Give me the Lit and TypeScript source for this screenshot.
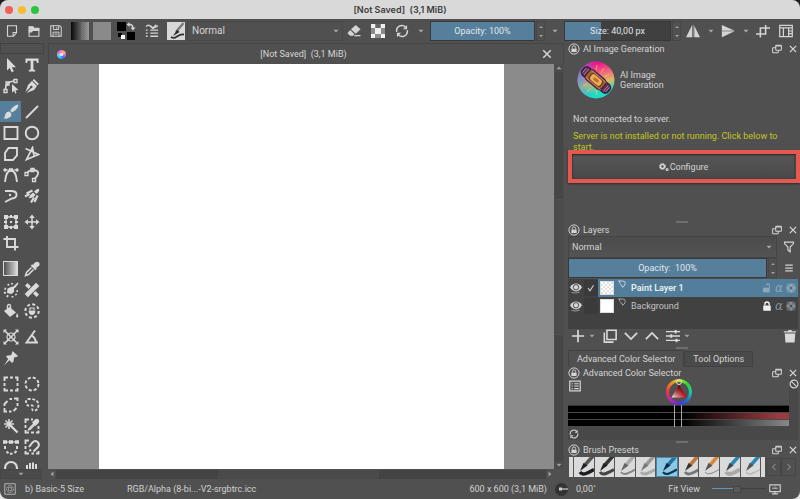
import { LitElement, html, css, svg, nothing, type TemplateResult, type SVGTemplateResult } from "lit";
import { customElement, property } from "lit/decorators.js";
import { classMap } from "lit/directives/class-map.js";
import { styleMap } from "lit/directives/style-map.js";

/* Icons are drawn on a 16 by 16 grid; "f" marks filled parts. */
const icons: Record<string, SVGTemplateResult> = {
  // menus and window parts
  down: svg`<path class="f" d="M3 5.500h10l-5 5.500z"/>`,
  up: svg`<path class="f" d="M3 10.500h10L8 5z"/>`,
  left: svg`<path class="f" d="M11 3v10L5 8z"/>`,
  right: svg`<path class="f" d="M5 3v10l6-5z"/>`,
  close: svg`<path d="M3 3l10 10M13 3L3 13" stroke-width="2"/>`,
  float: svg`<path d="M6 2h9v8H6zM6 6H1v8h9v-4" stroke-width="1.600"/><path d="M6 3h9" stroke-width="2"/>`,
  lockring: svg`<circle cx="8" cy="8" r="6.800" stroke-width="1.300"/><path class="f" d="M4.500 7.500h7V12h-7z"/><path d="M5.800 7.500V6a2.200 2.200 0 014.400 0v1.500"/>`,
  // top bar
  newdoc: svg`<path d="M2 1h12v9.500l-4 4.500H2zM14 10h-4.500v5" stroke-width="1.500"/>`,
  open: svg`<path d="M1.500 15V2.500h5l1 2h7V15z" stroke-width="1.500"/><path class="f" d="M1 2h6l1.500 2.500H15V8H6.500L5 10H1z"/>`,
  save: svg`<path d="M1 1h12l2 2v12H1z" stroke-width="1.400"/><path d="M4.500 1v5h7V1M9 3v2M4 15V9.500h8V15M6 12h4" stroke-width="1.300"/>`,
  brushset: svg`<path d="M1 3q3-3 6 0t8-1M1 7h2M6 7h9M1 10.500h2M6 10.500h9M1 14h2M6 14h9" stroke-width="1.500"/><path d="M6 2l3 3 4-4" stroke-width="2"/>`,
  eraser: svg`<path class="f" d="M10 1l5.500 5L10 11 4.500 6z"/><path class="f" d="M3.600 6.800l5 5L7 13.500H3.500L.5 10.500z"/><path class="f" d="M9 12.500h6.500V14H8z"/>`,
  reload: svg`<path d="M2 9A6 6 0 0112 3.400M14 7A6 6 0 014 12.600" stroke-width="1.700"/><path class="f" d="M13.800 1v5H9zM2.200 15v-5H7z"/>`,
  mirrorh: svg`<path class="f" d="M7 1v14H0zM9.500 2v13H16z"/><path d="M8.200 1v14" stroke-width=".6"/>`,
  mirrorv: svg`<path class="f" d="M1 1v6.300h14zM1 15V8.700h14z"/><path d="M1 8h14" stroke-width="1"/>`,
  croptop: svg`<path d="M0 11.500h11V1M5 15.500V4.500h11" stroke-width="1.800"/>`,
  workspace: svg`<path d="M.8 1.500h14.400v13H.8zM1 4.500h14M5 4.500v10M11 4.500v10M11 8h4M11 11h4" stroke-width="1.400"/>`,
  // toolbox
  arrow: svg`<path class="f" d="M4 1l9 9.300H8.800l2 4-2.100 1-2-4.200L4 13.500z"/>`,
  text: svg`<path class="f" d="M1.500 1.500h13V6H13l-.8-2.300H9.400v8.800l1.800.6v1.400H4.800v-1.400l1.800-.6V3.700H3.800L3 6H1.500z"/>`,
  editshape: svg`<path d="M2.500 12Q2 4 11 3" stroke-width="1.700"/><path d="M1 11.500h3v3H1zM3 4h3v3H3zM11 1.500h3v3h-3z" stroke-width="1.300"/><path class="f" d="M9 6l6.500 6-3 .3 1 2.700-1.300.4-1.200-2.600L9 14.500z"/>`,
  calligraphy: svg`<path class="f" d="M10 1l5 5-1.500 1.300-5-5zM8 3l5 5-3 4-7.500 3L7 10.300A1.300 1.300 0 106 9.400L1.500 14 4 7z"/>`,
  brush: svg`<path class="f" d="M14.500.5Q16 1 15 3q-2 4-6 5.500L7.200 6.700Q10 2 14.500.5z"/><path class="f" d="M6.300 7.500l2 2q.6 3.500-2.600 4.300Q3.500 15.500.5 14.300q1.800-1 1.500-3 .8-3.500 4.300-3.800z"/>`,
  line: svg`<path d="M2 14L14 2" stroke-width="1.800"/>`,
  rect: svg`<path d="M1.500 2h13v12h-13z" stroke-width="1.900"/>`,
  ellipse: svg`<circle cx="8" cy="8" r="6.300" stroke-width="1.900"/>`,
  polygon: svg`<path d="M5.500 2H14v7.500L10 14H2V7z" stroke-width="1.900"/>`,
  polyline: svg`<path d="M1.500 2.500l13 6-12 5L8.500 1.500l1.500 8" stroke-width="1.700"/>`,
  bezier: svg`<path d="M2 15Q3 3.500 8 3.500T14 15" stroke-width="1.900"/><path d="M2 3h12" stroke-width="1"/><circle class="f" cx="2" cy="3" r="1.700"/><circle class="f" cx="14" cy="3" r="1.700"/><path class="f" d="M6 1.300h4v3.400H6z"/>`,
  freepath: svg`<path d="M3 6q3-4 7-3 5 1 4 4t-3.500 5" stroke-width="1.800"/><path d="M1 5.500h3v3H1zM7 1.500h3v3H7zM8.500 11.500h3v3h-3z" stroke-width="1.300"/>`,
  dyna: svg`<path d="M2 3h6q5.500 0 5.500 3.500T9 10.500L2 14" stroke-width="1.900"/><circle class="f" cx="7" cy="7" r="1.200"/>`,
  multibrush: svg`<path class="f" d="M15 .8q1 2.500-2.500 5L10 3.800q2-3 5-3zM9 4.500l2.500 2.200Q9.500 10 4.500 10.300 6 6.500 9 4.500z"/><path d="M8.500 2.500L2.500 5.500M13.500 7.500l-3 6.500M5.500 6L1 8.500M10 9.500l-3 5" stroke-width="2.200"/>`,
  transform: svg`<path d="M3 3h10v10H3z" stroke-width="1.300"/><path class="f" d="M1 1h4v4H1zM11 1h4v4h-4zM1 11h4v4H1zM11 11h4v4h-4zM7 7h2v2H7zM7 1h2v3H7zM7 12h2v3H7zM1 7h3v2H1zM12 7h3v2h-3z"/>`,
  move: svg`<path d="M8 3v10M3 8h10" stroke-width="1.500"/><path class="f" d="M8 .5L10.800 4H5.200zM8 15.500l2.800-3.500H5.200zM.5 8L4 5.200v5.600zM15.500 8L12 5.200v5.600z"/>`,
  crop: svg`<path d="M4 1v11h11.500M.5 4H12v11.500" stroke-width="1.900"/>`,
  picker: svg`<path class="f" d="M10 2.500Q12.500-.5 14.800 1.500T13.500 6l-1.500 1 .8.800-1.500 1.500L6.700 4.700 8.200 3.200l.8.800z"/><path d="M7.500 6.500L2.500 11.500 1.500 14.500l3-1L9.500 8.500" stroke-width="1.500"/>`,
  colorize: svg`<path class="f" d="M14.500.5l1 1-3 4-1.500 1L11 10l-2.500 2L4 11l.5-4.500L8 5l2.500-.500z"/><path d="M1.500 6.500l1.500.5M5 2l.8 1.500M9 1v1.500M1 11l1.800-.5M4 15l1-1.800M9.500 15.500V14M13.500 13l-1-1M15 9h-1.500" stroke-width="1.900"/>`,
  patch: svg`<path d="M2.300 13.700L13.700 2.300" stroke-width="4.600"/><path class="f" d="M3.500 1L7 4.500 4.500 7 1 3.500zM11.500 9l3.500 3.500-2.500 2.500L9 11.500z"/>`,
  fill: svg`<path class="f" d="M6.500 4L13 9.500 7 14 1 8z"/><path d="M4.500 6V3q0-1.500 1.500-1.500T7.500 3v5" stroke-width="1.300"/><path class="f" d="M14 10q2.500 4 .3 4.500T14 10z"/>`,
  enclose: svg`<circle cx="8" cy="8" r="6.700" stroke-width="2" stroke-dasharray="3 2.260"/><path class="f" d="M4.500 7.500h7Q11 12 8 12T4.500 7.500z"/><path d="M6 7V5h4v2"/>`,
  assistant: svg`<circle cx="8" cy="8" r="4" stroke-width="1.200"/><path d="M1.500 1.500l13 13M14.500 1.500l-13 13" stroke-width="1.600"/><path class="f" d="M.5 4V.5H4zM12 .5h3.500V4zM.5 12v3.500H4zM15.500 12v3.500H12z"/>`,
  measure: svg`<path d="M11 1.500L2.500 13.500H14M8 6.500Q11.500 9 12 13.500" stroke-width="1.900"/>`,
  pin: svg`<path class="f" d="M9.500 1l5.500 5-1.500 1-2.500.5-.5 4L9 13 6.500 10.300 1 15.500 5.200 9 3 6.500l1.500-1 3.500-.3L9 3z"/>`,
  selrect: svg`<path d="M1.500 5V1.500H5M7 1.500h3M12 1.500h2.500V5M14.500 7v3M14.500 12v2.500H12M10 14.500H7M5 14.500H1.500V12M1.500 10V7" stroke-width="1.900"/>`,
  selellipse: svg`<circle cx="8" cy="8" r="6.500" stroke-width="1.900" stroke-dasharray="3.100 2"/>`,
  selpoly: svg`<path d="M1.500 9V7l3-3M6.500 2H9M11 1.500h3.500V4M14.500 6v3M13.500 11l-3 3M8.500 14.500H6M4 14.500H1.500V11" stroke-width="1.900"/>`,
  selfree: svg`<path d="M2 6Q1.500 2 5 2h3q5.500 1 6.500 5 0 6-4.500 7-2.500-.5-1.500-3Q10 8 7 8.500 3 9.500 2 6z" stroke-width="1.900" stroke-dasharray="2.800 1.700"/>`,
  wand: svg`<path d="M7 7l7.500 7.500" stroke-width="2.300"/><path d="M6 1v10M1 6h10M2.500 2.500l7 7M9.500 2.500l-7 7" stroke-width="1.600"/>`,
  selcolor: svg`<path d="M1.500 5V1.500H5M7 1.500h2M14.500 8v3M14.500 12.500v2H12M10 14.500H7M5 14.500H1.500V12M1.500 10V7" stroke-width="1.900"/><path d="M10 5.500l-5 5-.5 1.500 1.500-.5 5-5" stroke-width="1.300"/><path class="f" d="M8 4.500l3-3q2-1.500 3.500 0t0 3.500l-3 3z"/>`,
  selbezier: svg`<path d="M2 7v3M3.500 12.500l2 1.700M7 14.800h2.500M11.500 14l2-2M14 10V7" stroke-width="2"/><path d="M1 3h14" stroke-width="1.200"/><path class="f" d="M0 1.300h4v3.400H0zM12 1.300h4v3.400h-4zM6 1.300h4v3.400H6z"/>`,
  selmagnet: svg`<path d="M1.500 5V1.500H5M14.500 12v2.500H12M10 14.500H7.500M5 14.500H1.500V12M1.500 10V7" stroke-width="1.900"/><path d="M5 8l3.500-4.500Q11 .8 13.500 3t.5 5l-4.500 4.500M5.500 12l1.500-1.500" stroke-width="2"/>`,
  zoom: svg`<circle cx="8" cy="8" r="6" stroke-width="2.200"/>`,
  pan: svg`<path d="M3 5v6M6 3v8M9 2.500v8M12 4v8" stroke-width="2"/><path class="f" d="M2 9h11v6H4z"/>`,
  // docks
  gears: svg`<circle cx="5.500" cy="7" r="3.200" stroke-width="2.400"/><circle cx="5.500" cy="7" r="5" stroke-width="1.600" stroke-dasharray="2 1.920"/><circle cx="13" cy="12" r="1.600" stroke-width="1.800"/>`,
  filter: svg`<path d="M2 1.500h12v2L9.500 8v6.500L6.500 12V8L2 3.500z" stroke-width="1.500"/>`,
  menu: svg`<path d="M2 3.500h12M2 8h12M2 12.500h12" stroke-width="2"/>`,
  eye: svg`<path class="f" d="M0 7q3-5 8-5t8 5q-3 5.500-8 5.500T0 7z"/><circle cx="8" cy="7" r="3.600" stroke="#3f3f3f" stroke-width="1.200"/><path d="M2 14q6 1.500 11-.5" stroke-width=".8"/>`,
  check: svg`<path d="M2 8l4 5.500 7-11" stroke-width="2.200"/>`,
  paintmark: svg`<path d="M2 1.500L4 7M1 2h8q6 0 5.500 5-.5 5-5.500 7.500Q9.500 10 4.500 9" stroke-width="1.500"/>`,
  unlock: svg`<path class="f" d="M1.500 7.500h11V15h-11z"/><path d="M12 7V4a2.600 2.600 0 00-5.200 0" stroke-width="1.800"/>`,
  lock: svg`<path class="f" d="M2 7h12v8.500H2z"/><path d="M4.500 7V5a3.500 3.500 0 017 0v2" stroke-width="2.200"/>`,
  alphalock: svg`<path class="f" opacity=".5" d="M1 1h14v14H1z"/><path class="f" d="M5.700 1h4.600v4.700H15v4.600h-4.700V15H5.700v-4.700H1V5.700h4.700z"/><path d="M6 6h4v4H6z" class="f" style="fill:#555"/>`,
  plus: svg`<path d="M8 1v14M1 8h14" stroke-width="1.900"/>`,
  duplicate: svg`<path d="M4.500 1.500h10.500v10.500H4.500zM1.500 4v11h10.500" stroke-width="1.800"/>`,
  chevdown: svg`<path d="M1 4.500l7 7 7-7" stroke-width="2"/>`,
  chevup: svg`<path d="M1 11.500l7-7 7 7" stroke-width="2"/>`,
  chevleft: svg`<path d="M11 2L5 8l6 6" stroke-width="1.800"/>`,
  chevright: svg`<path d="M5 2l6 6-6 6" stroke-width="1.800"/>`,
  sliders: svg`<path d="M0 3h16M0 8h16M0 13h16" stroke-width="1.500"/><path d="M11 1v4M6 6v4M12 11v4" stroke-width="2.200"/>`,
  trash: svg`<path class="f" d="M2 5h12l-.8 10.500H2.800zM1 2.500h4.500L6.500 1h3l1 1.500H15V4H1z"/>`,
  panel: svg`<path d="M1 1.500h14v13H1z" stroke-width="1.600"/><path d="M3.500 5h1.500M3.500 8h1.500M3.500 11.500h1.500M7 5h6M7 8h6M7 11.500h6" stroke-width="1.600"/>`,
  forbid: svg`<circle cx="8" cy="8" r="6.300" stroke-width="1.900"/><path d="M3.500 3.500l9 9" stroke-width="1.900"/>`,
  target: svg`<path d="M1 1h14v14H1z" stroke-width="1"/><circle cx="8" cy="8" r="4.500" stroke-dasharray="2 1" stroke-width="1.100"/><path d="M6 6h4v4H6z" stroke-width=".7"/>`,
  monitor: svg`<path d="M1 2.500h14v9H1zM4 14.500h8M8 11.500v3" stroke-width="1.500"/><path class="f" d="M7 6h2v2H7zM4 6.500l2-1v3zM12 6.500l-2-1v3zM7.500 4h1v1h-1z"/>`,
};

const iconStyles = css`
  svg {
    display: block;
    flex: none;
    fill: none;
    stroke: currentColor;
    stroke-width: 1.2;
  }
  svg .f {
    fill: currentColor;
    stroke: none;
  }
  .i6 { width: 6px; height: 6px; }
  .i8 { width: 8px; height: 8px; }
  .i10 { width: 10px; height: 10px; }
  .i12 { width: 12px; height: 12px; }
  .i14 { width: 14px; height: 14px; }
  .i16 { width: 16px; height: 16px; }
`;

const base = css`
  * { box-sizing: border-box; }
  button, select, input {
    font: inherit;
    color: inherit;
    margin: 0;
    padding: 0;
    border: 0;
    background: none;
    appearance: none;
    border-radius: 0;
    outline: none;
  }
  button {
    display: flex;
    align-items: center;
    justify-content: center;
    flex: none;
  }
`;

const ico = (name: string, size = 16): TemplateResult =>
  html`<svg class="i${size}" viewBox="0 0 16 16" aria-hidden="true">${icons[name]}</svg>`;

/* Slider with its value written over the bar, and a pair of step arrows. */
@customElement("value-slider")
export class ValueSlider extends LitElement {
  @property() label = "";
  @property({ type: Number }) fill = 100;

  static styles = [
    base,
    iconStyles,
    css`
      :host { display: flex; min-width: 0; gap: 1px; }
      .track { position: relative; flex: 1; min-width: 0; display: flex; border: 1px solid #383838; }
      input {
        width: 100%;
        background: linear-gradient(90deg, #557f9a var(--fill), #404040 var(--fill));
      }
      input::-webkit-slider-thumb { appearance: none; width: 1px; height: 1px; }
      .value {
        position: absolute;
        inset: 0;
        display: flex;
        align-items: center;
        justify-content: center;
        color: #e0e6ea;
        white-space: pre;
        pointer-events: none;
      }
      .steps { display: flex; flex-direction: column; width: 9px; border: 1px solid #474747; color: #a0a0a0; }
      .steps button { flex: 1; }
    `,
  ];

  render() {
    return html`
      <label class="track">
        <input type="range" .value=${String(this.fill)} style=${styleMap({ "--fill": `${this.fill}%` })} />
        <span class="value">${this.label}</span>
      </label>
      <span class="steps">
        <button aria-label="Increase">${ico("up", 6)}</button>
        <button aria-label="Decrease">${ico("down", 6)}</button>
      </span>
    `;
  }
}

/* Title strip of a dock: lock, name, float and close. */
@customElement("dock-title")
export class DockTitle extends LitElement {
  @property() name = "";

  static styles = [
    base,
    iconStyles,
    css`
      :host { display: flex; align-items: center; height: 12px; padding: 0 2px 0 4px; gap: 3px; }
      h2 { flex: 1; margin: 0; font-size: inherit; font-weight: 400; line-height: 12px; }
      button + button { margin-left: 3px; }
    `,
  ];

  render() {
    return html`
      <button aria-label="Lock docker">${ico("lockring", 12)}</button>
      <h2>${this.name}</h2>
      <button aria-label="Float docker">${ico("float", 10)}</button>
      <button aria-label="Close docker">${ico("close", 10)}</button>
    `;
  }
}

const toolGroups: string[][] = [
  ["arrow", "text", "editshape", "calligraphy"],
  ["brush", "line", "rect", "ellipse", "polygon", "polyline", "bezier", "freepath", "dyna", "multibrush"],
  ["transform", "move", "crop"],
  ["gradient", "picker", "colorize", "patch", "fill", "enclose"],
  ["assistant", "measure", "pin"],
  ["selrect", "selellipse", "selpoly", "selfree", "wand", "selcolor", "selbezier", "selmagnet", "zoom", "pan"],
];

@customElement("tool-box")
export class ToolBox extends LitElement {
  static styles = [
    base,
    iconStyles,
    css`
      :host { display: flex; flex-direction: column; min-height: 0; color: #dadada; }
      .grip { flex: none; height: 11px; margin: 0 1px 0 0; border: 1px solid #424242; }
      .tools { flex: 1; min-height: 0; overflow: hidden; display: flex; flex-direction: column; gap: 5px; }
      .group { display: grid; grid-template-columns: 21px 21px; grid-auto-rows: 21px; }
      button.on { background: #557f9a; }
      .fade { width: 15px; height: 15px; border: 1px solid #dadada; background: linear-gradient(90deg, #505050, #dadada); }
      .more { height: 10px; width: 42px; background: #4a4a4a; border: 1px solid #454545; color: #a0a0a0; }
    `,
  ];

  render() {
    return html`
      <div class="grip"></div>
      <div class="tools">
        ${toolGroups.map(
          (g) => html`<div class="group">
            ${g.map(
              (t) => html`<button aria-label=${t} class=${classMap({ on: t === "brush" })}>
                ${t === "gradient" ? html`<span class="fade"></span>` : ico(t, 16)}
              </button>`
            )}
          </div>`
        )}
      </div>
      <button class="more" aria-label="More tools">${ico("down", 8)}</button>
    `;
  }
}

@customElement("top-bar")
export class TopBar extends LitElement {
  static styles = [
    base,
    iconStyles,
    css`
      :host { display: flex; height: 24px; align-items: center; color: #d4d4d4; padding: 1px 0; }
      .main { flex: 1; min-width: 0; display: flex; align-items: center; gap: 4px; padding: 0 4px 0 1px; }
      .side { width: 236px; flex: none; display: flex; align-items: center; gap: 1px; }
      .b { width: 22px; height: 22px; }
      .d { width: 11px; height: 22px; color: #a8a8a8; }
      .files, .modes { display: flex; gap: 0; }
      .modes { gap: 2px; margin: 0 -2px 0 -4px; }
      .sw { width: 18px; height: 18px; }
      .pat { background: #8a8a8a; }
      .preset { background: #d8d8d8; }
      .combo { position: relative; flex: 1; min-width: 0; height: 20px; display: flex; align-items: center; border: 1px solid #484848; margin-left: -2px; }
      .combo select { width: 100%; height: 100%; padding-left: 4px; font-size: 10px; }
      .combo svg { position: absolute; right: 2px; color: #a8a8a8; pointer-events: none; }
      value-slider { height: 20px; }
      .opacity { width: 115px; }
      .size { width: 117px; }
    `,
  ];

  render() {
    return html`
      <div class="main">
        <span class="files">
          <button class="b" aria-label="New">${ico("newdoc", 12)}</button>
          <button class="b" aria-label="Open">${ico("open", 12)}</button>
          <button class="b" aria-label="Save">${ico("save", 12)}</button>
        </span>
        <button class="sw" aria-label="Gradient">
          <svg width="18" height="18" viewBox="0 0 18 18">
            <defs>
              <linearGradient id="bg"><stop offset="0" stop-color="#080808" /><stop offset="1" stop-color="#a8a8a8" /></linearGradient>
              <pattern id="ck" width="2" height="2" patternUnits="userSpaceOnUse"><path class="f" d="M0 0h1v1H0zM1 1h1v1H1z" style="fill:#777" /></pattern>
            </defs>
            <rect width="18" height="18" stroke="none" fill="url(#bg)" />
            <rect x="10" width="8" height="18" stroke="none" fill="url(#ck)" opacity=".6" />
          </svg>
        </button>
        <button class="sw pat" aria-label="Pattern"></button>
        <button class="b" aria-label="Colors">
          <svg width="20" height="20" viewBox="0 0 20 20" stroke="none">
            <path fill="#000" stroke="none" d="M1 1h9v9H1zM11 11h8v8h-8zM2 12h4v4H2z" />
            <path fill="#fff" stroke="none" d="M5 14h4v4H5z" />
            <path stroke-width="1.500" d="M13 3.500q4-.5 4 4" />
            <path class="f" d="M13.500 1v5l-2.800-2.500zM14.500 6.500h5L17 9.500z" />
          </svg>
        </button>
        <button class="b" aria-label="Brush settings">${ico("brushset", 14)}</button>
        <button class="sw preset" aria-label="Brush preset">
          <svg width="18" height="18" viewBox="0 0 18 18">
            <path d="M16.500 1L9 10" stroke="#777" stroke-width="2.200" />
            <path class="f" d="M10 8l2.500 2L6 14z" style="fill:#222" />
            <path d="M4 15q2.500 2 6-.5t7-2" stroke="#333" stroke-width="1.800" />
          </svg>
        </button>
        <label class="combo">
          <select aria-label="Blending mode"><option>Normal</option></select>
          ${ico("down", 8)}
        </label>
        <span class="modes">
          <button class="b" aria-label="Eraser">${ico("eraser", 14)}</button>
          <button class="b" aria-label="Preserve alpha">
            <svg class="i14" viewBox="0 0 14 14">
              <path class="f" d="M0 0h14v14H0z" style="fill:#8a8a8a" />
              <path class="f" d="M0 0h4v4H0zM10 0h4v4h-4zM4 4h6v6H4zM0 10h4v4H0zM10 10h4v4h-4z" style="fill:#f0f0f0" />
              <path class="f" d="M5 0h4v4H5z" style="fill:#666" />
            </svg>
          </button>
          <button class="b" aria-label="Reload preset">${ico("reload", 14)}</button>
        </span>
        <button class="d" aria-label="Reload menu">${ico("down", 8)}</button>
        <value-slider class="opacity" label="Opacity: 100%" fill="100"></value-slider>
        <button class="d" aria-label="Opacity menu">${ico("down", 8)}</button>
      </div>
      <div class="side">
        <value-slider class="size" label="Size: 40,00 px" fill="34"></value-slider>
        <button class="b" aria-label="Mirror horizontally">${ico("mirrorh", 14)}</button>
        <button class="d" aria-label="Horizontal menu">${ico("down", 8)}</button>
        <button class="b" aria-label="Mirror vertically">${ico("mirrorv", 14)}</button>
        <button class="d" aria-label="Vertical menu">${ico("down", 8)}</button>
        <button class="b" aria-label="Wrap around">${ico("croptop", 14)}</button>
        <button class="b" aria-label="Workspaces">${ico("workspace", 14)}</button>
      </div>
    `;
  }
}

@customElement("document-view")
export class DocumentView extends LitElement {
  static styles = [
    base,
    iconStyles,
    css`
      :host { display: grid; grid-template: 21px minmax(0, 1fr) 10px / minmax(0, 1fr) 10px; min-width: 0; min-height: 0; background: #505050; }
      .tab { grid-column: 1 / -1; display: flex; align-items: center; padding: 0 10px 0 8px; border: 1px solid #454545; border-bottom: 0; }
      .name { flex: 1; text-align: center; white-space: pre; color: #d6d6d6; }
      .ball { width: 9px; height: 9px; border-radius: 50%; background: radial-gradient(circle, #eef 0 15%, transparent 35%), conic-gradient(#f7c, #fb6, #c6e, #46e, #2cf, #6df, #e6c, #f7c); }
      .desk { background: #8b8b8b; display: flex; justify-content: center; min-height: 0; overflow: hidden; }
      .page { background: #fff; height: 100%; aspect-ratio: 1; flex: none; }
      .vbar, .hbar { display: flex; align-items: center; justify-content: space-between; color: #a0a0a0; }
      .vbar { flex-direction: column; background: #4c4c4c; }
      .vthumb { flex: 1; width: 8px; display: flex; flex-direction: column; justify-content: center; background: #464646; }
      .vthumb::before { content: ""; height: 134px; border: 1px solid #515151; border-width: 1px 0; background: #4b4b4b; }
      .hthumb { flex: 1; height: 9px; background: linear-gradient(90deg, #434343 33%, #4a4a4a 33% 66%, #434343 66%); }
    `,
  ];

  render() {
    return html`
      <header class="tab">
        <span class="ball"></span>
        <span class="name">[Not Saved]  (3,1 MiB)</span>
        <button aria-label="Close document">${ico("close", 12)}</button>
      </header>
      <div class="desk"><div class="page"></div></div>
      <div class="vbar">
        <button aria-label="Scroll up">${ico("up", 8)}</button>
        <span class="vthumb"></span>
        <button aria-label="Scroll down">${ico("down", 8)}</button>
      </div>
      <div class="hbar">
        <button aria-label="Scroll left">${ico("left", 8)}</button>
        <span class="hthumb"></span>
        <button aria-label="Scroll right">${ico("right", 8)}</button>
      </div>
    `;
  }
}

@customElement("ai-dock")
export class AiDock extends LitElement {
  static styles = [
    base,
    iconStyles,
    css`
      :host { display: block; }
      .head { display: flex; align-items: center; gap: 5px; padding: 6px 0 0 13px; line-height: 10px; }
      .logo { width: 38px; height: 38px; }
      p { margin: 0; padding-left: 9px; }
      .state { margin-top: 14px; line-height: 12px; }
      .warn { margin-top: 6px; height: 20px; line-height: 11px; color: #c6c61e; }
      .action { position: relative; margin: 3px 5px 0 8px; }
      .action::after {
        content: "";
        position: absolute;
        inset: -4px -5px -4px -4px;
        border: 4px solid #e45850;
        box-shadow: 0 1px 2px #2c2c2c, inset 0 1px 2px #2c2c2c;
        pointer-events: none;
      }
      .action button { width: 100%; height: 25px; gap: 1px; border: 1px solid #434343; background: linear-gradient(#565656, #494949); }
    `,
  ];

  render() {
    return html`
      <dock-title name="AI Image Generation"></dock-title>
      <div class="head">
        <svg class="logo" viewBox="0 0 38 38">
          <defs>
            <linearGradient id="sky" x1=".3" y1="0" x2=".55" y2="1">
              <stop offset=".1" stop-color="#f0128e" /><stop offset=".38" stop-color="#f06a80" />
              <stop offset=".6" stop-color="#e0b860" /><stop offset=".85" stop-color="#1cdcc8" />
            </linearGradient>
            <linearGradient id="cool"><stop offset="0" stop-color="#3aa8e8" /><stop offset=".5" stop-color="#3aa8e8" stop-opacity="0" /></linearGradient>
          </defs>
          <circle cx="19" cy="19" r="18.500" stroke="none" fill="url(#sky)" />
          <circle cx="19" cy="19" r="18.500" stroke="none" fill="url(#cool)" opacity=".7" />
          <path stroke="#f8c850" stroke-width=".8" d="M12 6l3 4M20 4l-1 5M27 7l-3 5M32 13l-5 3M6 25l4-2M10 31l4-4M20 34l-1-5" />
          <g transform="rotate(40 19 19)">
            <rect x="2" y="14" width="34" height="10" rx="4" fill="#5c2f58" stroke="#2a1838" />
            <rect x="8" y="13" width="21" height="12" rx="4" fill="#a8602c" stroke="#42202c" stroke-width="1.200" />
            <rect x="12" y="15" width="14" height="8" rx="3" fill="#e8b050" stroke="#6a3424" />
            <ellipse cx="19" cy="19" rx="4" ry="2" fill="#c86828" stroke="#f4d070" stroke-width=".6" />
            <path stroke="#c88cb0" stroke-width=".8" d="M4 16v6M6.500 15v8M32 15v8M34 16v6M9 14.500h20M9 23.500h20" />
          </g>
        </svg>
        <span>AI Image<br />Generation</span>
      </div>
      <p class="state">Not connected to server.</p>
      <p class="warn">Server is not installed or not running. Click below to start.</p>
      <div class="action"><button>${ico("gears", 10)} Configure</button></div>
    `;
  }
}

const layers = [
  { name: "Paint Layer 1", active: true },
  { name: "Background", active: false },
];

@customElement("layers-dock")
export class LayersDock extends LitElement {
  static styles = [
    base,
    iconStyles,
    css`
      :host { display: block; padding-bottom: 3px; }
      .line { display: flex; align-items: center; padding-left: 4px; }
      .combo { position: relative; flex: 1; height: 22px; display: flex; align-items: center; border: 1px solid #454545; background: linear-gradient(#4c4c4c, #535353); }
      .combo select { width: 100%; height: 100%; padding-left: 3px; }
      .combo svg { position: absolute; right: 3px; color: #a8a8a8; pointer-events: none; }
      .line > button { width: 23px; height: 20px; }
      value-slider { flex: 1; height: 20px; }
      .list { margin: 1px 2px 0 4px; height: 50px; background: #414141; }
      .row { display: flex; align-items: center; height: 18px; }
      .row > button { width: 16px; }
      .tick { width: 14px; height: 16px; background: #3a3a3a; display: flex; align-items: center; justify-content: center; }
      .body { flex: 1; display: flex; align-items: center; align-self: stretch; padding: 0 2px; color: #c4c4c4; }
      .row.active .body { background: #527e9b; color: #e8eef2; font-weight: 600; }
      .thumb { width: 14px; height: 14px; border: 1px solid #ddd; background: #fff; }
      .active .thumb { background: repeating-conic-gradient(#e0e0e0 0 25%, #fff 0 50%) 0 0 / 4px 4px; }
      .mark { align-self: flex-start; margin: 1px 5px 0 4px; }
      .name { flex: 1; }
      .flags { display: flex; align-items: center; gap: 3px; color: #b8c4cc; }
      .flags > * { opacity: 0.6; }
      .flags .solid { opacity: 1; color: #f0f0f0; }
      .alpha { font: italic 12px/14px "DejaVu Serif", serif; }
      .tools { display: flex; align-items: center; height: 14px; padding: 0 3px 0 7px; color: #dadada; }
      .space { flex: 1; }
      .tools .gap { margin-left: 7px; }
      .tools .drop { color: #a0a0a0; margin-left: 3px; }
    `,
  ];

  render() {
    return html`
      <dock-title name="Layers"></dock-title>
      <div class="line">
        <label class="combo">
          <select aria-label="Layer blending mode"><option>Normal</option></select>
          ${ico("down", 8)}
        </label>
        <button aria-label="Filter">${ico("filter", 12)}</button>
      </div>
      <div class="line">
        <value-slider label="Opacity:  100%" fill="100"></value-slider>
        <button aria-label="Layer menu">${ico("menu", 10)}</button>
      </div>
      <div class="list">
        ${layers.map(
          (l) => html`<div class=${classMap({ row: true, active: l.active })}>
            <button aria-label="Visible">${ico("eye", 12)}</button>
            <span class="tick">${l.active ? ico("check", 8) : nothing}</span>
            <div class="body">
              <span class="thumb"></span>
              <span class="mark">${ico("paintmark", 8)}</span>
              <span class="name">${l.name}</span>
              <span class="flags">
                <span class=${classMap({ solid: !l.active })}>${ico(l.active ? "unlock" : "lock", 10)}</span>
                <span class="alpha">α</span>
                <span>${ico("alphalock", 10)}</span>
              </span>
            </div>
          </div>`
        )}
      </div>
      <div class="tools">
        <button aria-label="Add layer">${ico("plus", 14)}</button>
        <button class="drop" aria-label="Add menu">${ico("down", 8)}</button>
        <button aria-label="Duplicate" class="gap">${ico("duplicate", 14)}</button>
        <button aria-label="Move down" class="gap">${ico("chevdown", 14)}</button>
        <button aria-label="Move up" class="gap">${ico("chevup", 14)}</button>
        <button aria-label="Properties" class="gap">${ico("sliders", 14)}</button>
        <button class="drop" aria-label="Properties menu">${ico("down", 8)}</button>
        <span class="space"></span>
        <button aria-label="Delete layer">${ico("trash", 14)}</button>
      </div>
    `;
  }
}

@customElement("color-dock")
export class ColorDock extends LitElement {
  static styles = [
    base,
    iconStyles,
    css`
      :host { display: block; }
      .tabs { display: flex; padding-left: 4px; height: 17px; align-items: flex-end; }
      .tabs button { height: 16px; padding: 0 8px; border: 1px solid #424242; background: #4a4a4a; }
      .tabs button.on { height: 17px; background: #505050; border-bottom-color: #505050; }
      .area { display: grid; grid-template: 26px auto 13px / minmax(0, 1fr) 9px; margin: 0 2px 0 4px; background: #484848; }
      .top { position: relative; display: flex; justify-content: center; background: #505050; }
      .top > button { position: absolute; left: 1px; top: 1px; }
      .wheel { position: relative; width: 26px; height: 26px; border-radius: 50%; display: flex; align-items: center; justify-content: center;
        background: conic-gradient(#c8e020, #30d830 12%, #20c8a0 25%, #2060e0 40%, #5030d8 50%, #c020c0 62%, #f03050 75%, #f08020 87%, #c8e020); }
      .wheel::before { content: ""; position: absolute; inset: 3px; border-radius: 50%; background: #505050; }
      .wheel::after { content: ""; position: absolute; top: 0; width: 4px; height: 4px; border: 1px solid #ddd; border-radius: 50%; }
      .wheel svg { position: relative; }
      .end { display: flex; flex-direction: column; align-items: center; }
      .bars { position: relative; display: grid; grid-template-rows: repeat(3, 6px); gap: 1px; background: #4a4a4a; padding-bottom: 1px; border: 1px solid #333; border-width: 1px 0 0 0; }
      .k { background: #000; }
      .r { background: linear-gradient(90deg, #000 52%, #983c40 95%); }
      .g { background: linear-gradient(90deg, #000 52%, #888); }
      .cursor { position: absolute; top: -1px; bottom: 0; left: 48%; width: 8px; border: 1px solid #aaa; border-width: 0 1px; }
      .foot { display: flex; align-items: center; padding-left: 1px; }
    `,
  ];

  render() {
    return html`
      <div class="tabs" role="tablist">
        <button class="on" role="tab">Advanced Color Selector</button>
        <button role="tab">Tool Options</button>
      </div>
      <dock-title name="Advanced Color Selector"></dock-title>
      <div class="area">
        <div class="top">
          <button aria-label="Selector settings">${ico("panel", 12)}</button>
          <div class="wheel">
            <svg width="18" height="18" viewBox="0 0 18 18">
              <defs>
                <linearGradient id="tri" x1="0" y1=".9" x2="1" y2=".6"><stop offset="0" stop-color="#eee" /><stop offset=".9" stop-color="#e00010" /></linearGradient>
                <linearGradient id="shade" x1="0" y1="0" x2="0" y2="1"><stop offset=".2" stop-color="#500" stop-opacity=".8" /><stop offset="1" stop-color="#500" stop-opacity="0" /></linearGradient>
              </defs>
              <path d="M9 1.500l7.500 13H1.500z" stroke="none" fill="url(#tri)" />
              <path d="M9 1.500l7.500 13H1.500z" stroke="none" fill="url(#shade)" />
            </svg>
          </div>
        </div>
        <div class="end"><button aria-label="No color">${ico("forbid", 10)}</button></div>
        <div class="bars">
          <span class="k"></span><span class="r"></span><span class="g"></span>
          <span class="cursor"></span>
        </div>
        <div></div>
        <div class="foot"><button aria-label="Refresh">${ico("reload", 10)}</button></div>
      </div>
    `;
  }
}

const presets = [
  { shaft: "#555", tip: "#222", stroke: "#1c1c24", w: 3.4 },
  { shaft: "#333", tip: "#222", stroke: "#444", w: 3 },
  { shaft: "#aaa", tip: "#666", stroke: "#888", w: 2 },
  { shaft: "#999", tip: "#777", stroke: "#aaa", w: 3 },
  { shaft: "#26719c", tip: "#0c2a40", stroke: "#0c3450", w: 2.2, on: true },
  { shaft: "#c07838", tip: "#333", stroke: "#777", w: 2.8 },
  { shaft: "#d8883c", tip: "#555", stroke: "#888", w: 1 },
  { shaft: "#2a86b0", tip: "#444", stroke: "#aaa", w: 4 },
  { shaft: "#2a86b0", tip: "#555", stroke: "#b8b8b8", w: 1.4 },
];

@customElement("presets-dock")
export class PresetsDock extends LitElement {
  static styles = [
    base,
    iconStyles,
    css`
      :host { display: block; padding-bottom: 2px; }
      .strip { display: flex; align-items: center; padding: 0 4px 0 5px; height: 20px; margin-top: 1px; }
      .cells { flex: 1; min-width: 0; display: flex; gap: 1px; height: 20px; background: #555; overflow: hidden; }
      .cell { flex: 1; min-width: 0; height: 20px; background: #dadada; overflow: hidden; }
      .cell.on { background: #8cc8e4; border: 1px solid #4a88aa; }
      .edge { flex: none; width: 4px; background: #dadada; }
      .nav { width: 15px; height: 18px; border: 1px solid #464646; color: #a8a8a8; }
      .nav.first { margin-left: 1px; }
    `,
  ];

  render() {
    return html`
      <dock-title name="Brush Presets"></dock-title>
      <div class="strip">
        <div class="cells">
          <span class="edge"></span>
          ${presets.map(
            (p) => html`<button class=${classMap({ cell: true, on: !!p.on })} aria-label="Brush preset">
              <svg width="20" height="20" viewBox="0 0 20 20">
                <path d="M6 15q2 3 6 1.500t8-4" stroke=${p.stroke} stroke-width=${p.w} />
                <path d="M19-1l-8 9" stroke=${p.shaft} stroke-width="3.600" />
                <path d="M13.500 8.500L6 14l3.500-8z" stroke="none" fill=${p.tip} />
              </svg>
            </button>`
          )}
          <span class="edge"></span>
        </div>
        <button class="nav first" aria-label="Previous">${ico("chevleft", 8)}</button>
        <button class="nav" aria-label="Next">${ico("chevright", 8)}</button>
      </div>
    `;
  }
}

@customElement("status-bar")
export class StatusBar extends LitElement {
  static styles = [
    base,
    iconStyles,
    css`
      :host { display: flex; align-items: center; height: 20px; color: #d0d0d0; }
      .left { flex: 1; min-width: 0; display: flex; align-items: center; padding: 0 8px 0 4px; }
      .brush { width: 102px; padding-left: 9px; }
      .profile { flex: 1; padding-left: 9px; }
      .right { width: 245px; flex: none; display: flex; align-items: center; }
      .dial { width: 13px; height: 13px; border-radius: 50%; background: #333; color: #d0d0d0; }
      .angle { flex: 1; padding-left: 8px; }
      .zoom { position: relative; width: 54px; height: 10px; margin: 0 3px 0 12px;
        background: linear-gradient(#5f96b8, #5f96b8) 0 4px / 25px 1px no-repeat, linear-gradient(#404040, #404040) 0 4px / 100% 1px no-repeat; }
      .zoom::-webkit-slider-thumb { appearance: none; width: 8px; height: 7px; background: #5a5a5a; border: 1px solid #454545; }
      .fit { margin-right: 19px; }
    `,
  ];

  render() {
    return html`
      <div class="left">
        ${ico("target", 12)}
        <span class="brush">b) Basic-5 Size</span>
        <span class="profile">RGB/Alpha (8-bi...-V2-srgbtrc.icc</span>
        <span>600 x 600 (3,1 MiB)</span>
      </div>
      <div class="right">
        <button class="dial" aria-label="Canvas rotation">
          <svg class="i12" viewBox="0 0 12 12"><path d="M4 6h8" /><path class="f" d="M3 4.500h3v3H3z" /></svg>
        </button>
        <span class="angle">0,00˚</span>
        <span>Fit View</span>
        <input class="zoom" type="range" min="0" max="100" .value=${"45"} aria-label="Zoom" />
        <button class="fit" aria-label="Map to screen">${ico("monitor", 12)}</button>
      </div>
    `;
  }
}

@customElement("app-root")
export class AppRoot extends LitElement {
  static styles = [
    base,
    css`
      :host {
        display: block;
        background: linear-gradient(#1e1e1e 50%, #e4e4e4 50%);
        font: 9px/12px Roboto, "Liberation Sans", sans-serif;
        color: #d4d4d4;
      }
      .window { height: 100vh; display: flex; flex-direction: column; border-radius: 8px; overflow: hidden; background: #505050; }
      .titlebar { height: 19px; flex: none; display: flex; align-items: center; background: #d9d9d9; color: #3c3c3c; padding: 0 5px; }
      .lights { display: flex; gap: 5px; width: 54px; }
      .lights button { width: 8px; height: 8px; border-radius: 50%; }
      .red { background: #f25f58; }
      .yellow { background: #f9bc30; }
      .green { background: #2ac53f; }
      h1 { flex: 1; margin: 0 54px 0 0; font: 600 9px/12px Inter, sans-serif; text-align: center; white-space: pre; }
      .work { flex: 1; min-height: 0; display: flex; }
      tool-box { width: 45px; flex: none; }
      document-view { flex: 1; margin-left: 3px; }
      .docks { width: 236px; flex: none; display: flex; flex-direction: column; min-height: 0; }
      ai-dock { flex: 1; }
      .grip { flex: none; height: 2px; width: 12px; margin: 1px auto; background: #6e6e6e; }
    `,
  ];

  render() {
    return html`
      <div class="window">
        <header class="titlebar">
          <span class="lights">
            <button class="red" aria-label="Close"></button>
            <button class="yellow" aria-label="Minimize"></button>
            <button class="green" aria-label="Zoom"></button>
          </span>
          <h1>[Not Saved]  (3,1 MiB)</h1>
        </header>
        <top-bar></top-bar>
        <main class="work">
          <tool-box></tool-box>
          <document-view></document-view>
          <aside class="docks">
            <ai-dock></ai-dock>
            <div class="grip"></div>
            <layers-dock></layers-dock>
            <div class="grip"></div>
            <color-dock></color-dock>
            <div class="grip"></div>
            <presets-dock></presets-dock>
          </aside>
        </main>
        <status-bar></status-bar>
      </div>
    `;
  }
}
